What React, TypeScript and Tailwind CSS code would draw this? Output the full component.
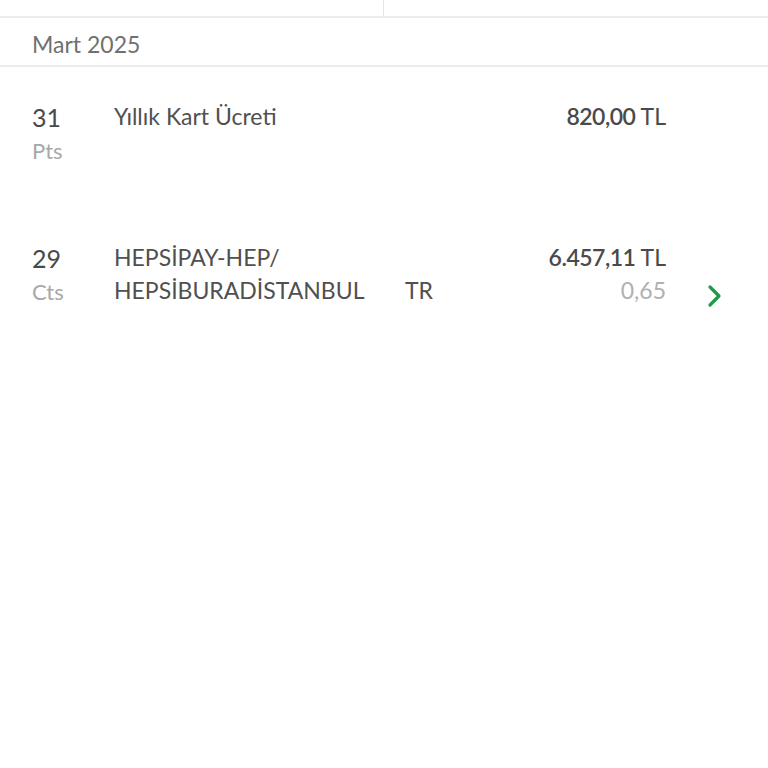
type Txn = {
  day: string;
  dow: string;
  lines: string[];
  country?: string;
  amount: string;
  points?: string;
  link?: boolean;
};

const txns: Txn[] = [
  { day: "31", dow: "Pts", lines: ["Yıllık Kart Ücreti"], amount: "820,00" },
  {
    day: "29",
    dow: "Cts",
    lines: ["HEPSİPAY-HEP/", "HEPSİBURADİSTANBUL"],
    country: "TR",
    amount: "6.457,11",
    points: "0,65",
    link: true,
  },
];

const TxnRow = ({ t }: { t: Txn }) => (
  <div className="flex h-[141px] pt-[33px] pl-8">
    <div className="w-[82px] flex flex-col">
      <span className="text-[25px] leading-[34px] text-[#4a4a4a]">{t.day}</span>
      <span className="text-[22px] leading-[34px] text-[#a8a8a8]">{t.dow}</span>
    </div>
    <div className="flex-1 flex flex-col text-[23px] leading-[33px] text-[#505050]">
      {t.lines.map((l, i) => (
        <div key={i} className="flex">
          <span className="w-[291px]">{l}</span>
          {i === t.lines.length - 1 && t.country && <span>{t.country}</span>}
        </div>
      ))}
    </div>
    <div className="flex flex-col items-end text-[23px] leading-[33px]">
      <span className="text-[#4a4a4a]">
        <span className="font-semibold tracking-[-0.5px]">{t.amount}</span>{" "}
        <span className="font-normal">TL</span>
      </span>
      {t.points && <span className="text-[#b0b0b0]">{t.points}</span>}
    </div>
    <div className="w-[102px] flex flex-col">
      {t.link && (
        <div className="mt-[43px] pl-[40px]">
          <svg width="18" height="24" viewBox="0 0 18 24" fill="none">
            <polyline
              points="4,3 13,12 4,21"
              stroke="#1f9a4a"
              strokeWidth="3.2"
              strokeLinecap="round"
              strokeLinejoin="round"
            />
          </svg>
        </div>
      )}
    </div>
  </div>
);

export default function App() {
  return (
    <div className="w-[768px] h-[768px] bg-white font-['Lato',sans-serif] overflow-hidden">
      <div className="flex h-[18px] border-b-2 border-[#ececec]">
        <div className="w-[384px] border-r border-[#e6e6e6]" />
        <div className="flex-1" />
      </div>
      <div className="h-[49px] flex items-center pl-8 border-b-2 border-[#ececec]">
        <span className="text-[23px] pt-[5px] text-[#707070]">Mart 2025</span>
      </div>
      {txns.map((t) => (
        <TxnRow key={t.day} t={t} />
      ))}
    </div>
  );
}
